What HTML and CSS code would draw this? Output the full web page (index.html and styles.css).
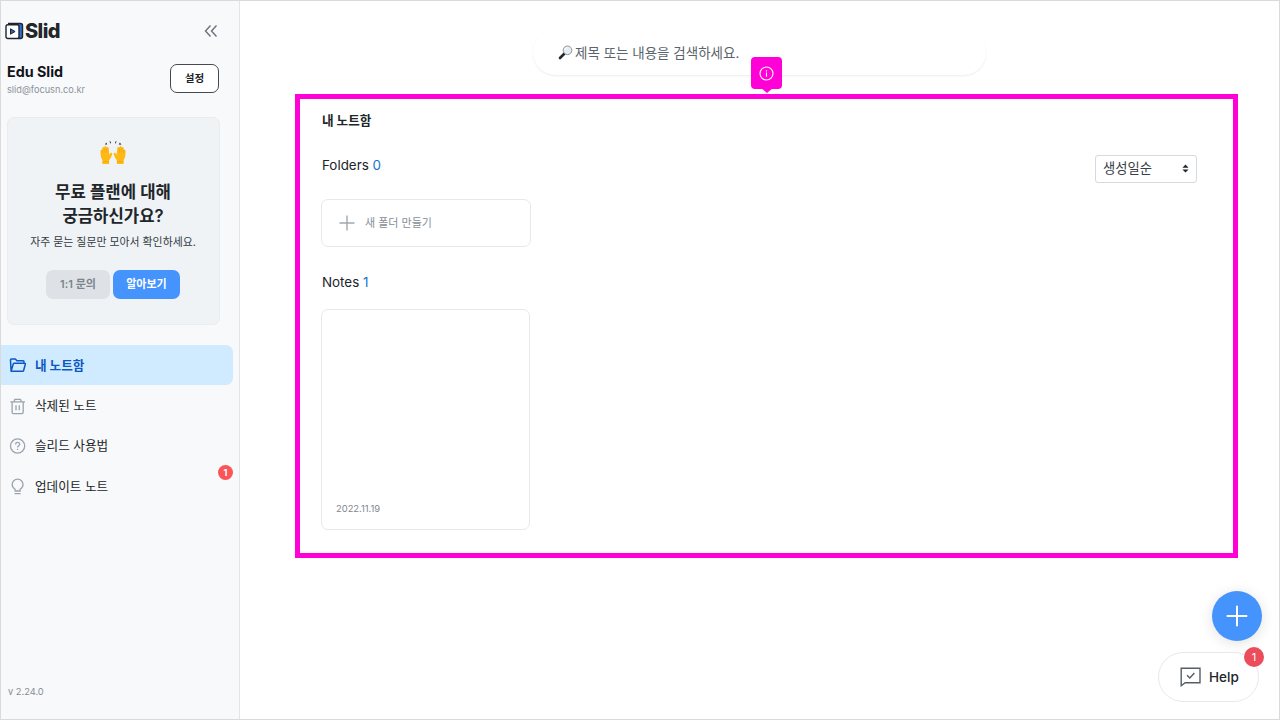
FILE: index.html
```html
<!DOCTYPE html>
<html lang="ko">
<head>
    <meta charset="UTF-8">
    <meta name="viewport" content="width=device-width, initial-scale=1.0">
    <title>Slid - 내 노트함</title>
    <link rel="stylesheet" href="styles.css">
</head>
<body>
    <aside class="sidebar">
        <div class="brand">
            <svg class="brand-icon" width="19" height="18" viewBox="0 0 19 18">
                <path d="M3 1.500h12.500a2 2 0 0 1 2 2v11a2 2 0 0 1-2 2H13" fill="#2f6fd0" stroke="#1d2430" stroke-width="1.400"/>
                <rect x="1" y="2.800" width="13" height="13.700" rx="1.800" fill="#fff" stroke="#1d2430" stroke-width="1.400"/>
                <path d="M5.500 6.800v5.400l4.600-2.700z" fill="#1d66c9" stroke="#1d2430" stroke-width="1"/>
            </svg>
            <span class="brand-name">Slid</span>
            <svg class="collapse" width="14" height="14" viewBox="0 0 14 14" fill="none" stroke="#68727d" stroke-width="1.400">
                <path d="M6.500 1.500L1.500 7l5 5.500M12.500 1.500l-5 5.500 5 5.500"/>
            </svg>
        </div>

        <div class="profile">
            <div>
                <div class="profile-name">Edu Slid</div>
                <div class="profile-mail">slid@focusn.co.kr</div>
            </div>
            <button class="settings">설정</button>
        </div>

        <div class="plan">
            <svg class="plan-icon" width="26" height="24" viewBox="0 0 26 24">
                <g id="hand">
                    <path d="M2.400 23v-4C1 17.300.4 14.500.5 9.800c0-1.300 1.400-1.400 1.600-.2l.2-2.500c.1-1.400 1.800-1.400 1.900 0l.2-1.200c.2-1.400 2-1.300 2.100 0l.2 1c.3-1.200 1.900-1.100 2 .3l.6 6.500.8-1.200c.9-1.300 2.700-.4 2.100 1-.8 2.100-1.400 4.100-3.100 5.600V23z" fill="#ffb914"/>
                    <path d="M2.200 12V8.500M4.300 11.500V7M6.600 11.500V7" fill="none" stroke="#ee9c12" stroke-width=".5"/>
                    <path d="M2.500 20.600h6.500" stroke="#f0a012" stroke-width=".7"/>
                </g>
                <use href="#hand" transform="translate(26 0) scale(-1 1)"/>
                <path d="M4.800 3.600l1.500-2 1 2zM9.200.6l1.600-.2.300 2.500zM15.200.4l1.600.2-1.800 2.300zM18.700 3.600l1.200-2 1.600 2.200z" fill="#333a40"/>
            </svg>
            <h2>무료 플랜에 대해<br>궁금하신가요?</h2>
            <p>자주 묻는 질문만 모아서 확인하세요.</p>
            <div class="plan-buttons">
                <button class="btn-gray">1:1 문의</button>
                <button class="btn-blue">알아보기</button>
            </div>
        </div>

        <nav class="menu">
            <a class="menu-item active">
                <svg width="18" height="18" viewBox="0 0 18 18" fill="none" stroke="#0b57c4" stroke-width="1.500" stroke-linejoin="round">
                    <path d="M2.100 15.200L1.500 4a1 1 0 0 1 1-1.100h3.800l1.700 1.900h6a1 1 0 0 1 1 1v1.300M2.100 15.200l2.200-7.300a1 1 0 0 1 1-.7h10.200a.8.8 0 0 1 .8 1.100l-1.700 6.200a1 1 0 0 1-1 .7z"/>
                </svg>
                <span>내 노트함</span>
            </a>
            <a class="menu-item">
                <svg width="18" height="18" viewBox="0 0 18 18" fill="none" stroke="#9aa4ae" stroke-width="1.300" stroke-linejoin="round">
                    <path d="M1.300 4.800h14.700M5 4.800l.8-2.500h5.700l.8 2.500M3.100 4.800v10.500c0 .8.500 1.300 1.300 1.300h8.500c.8 0 1.300-.5 1.300-1.300V4.800M7 8.200v5M10.300 8.200v5"/>
                </svg>
                <span>삭제된 노트</span>
            </a>
            <a class="menu-item">
                <svg width="18" height="18" viewBox="0 0 18 18" fill="none" stroke="#9aa4ae" stroke-width="1.300">
                    <circle cx="8.600" cy="9" r="7.100"/>
                    <path d="M6.600 7.400c0-2.700 4.100-2.600 4.100-.1 0 1.500-2.100 1.500-2.100 3.200M8.600 11.800v1.300"/>
                </svg>
                <span>슬리드 사용법</span>
            </a>
            <a class="menu-item">
                <svg width="18" height="18" viewBox="0 0 18 18" fill="none" stroke="#9aa4ae" stroke-width="1.300">
                    <path d="M6.100 14v-1.700c-1.700-1-2.900-2.700-2.900-4.800a5.400 5.400 0 0 1 10.800 0c0 2.100-1.200 3.800-2.900 4.800V14zM5.600 16.700h6"/>
                </svg>
                <span>업데이트 노트</span>
                <span class="menu-badge">1</span>
            </a>
        </nav>

        <div class="version">v 2.24.0</div>
    </aside>

    <main class="content">
        <div class="search">
            <svg width="15" height="15" viewBox="0 0 15 15">
                <path d="M2 13l4.500-4.500" stroke="#25292d" stroke-width="2.600" stroke-linecap="round"/>
                <circle cx="9.500" cy="5.300" r="4.300" fill="#e8ecef" stroke="#8d959b" stroke-width="1"/>
                <path d="M6.800 5a2.600 2.600 0 0 1 2.500-2.300" fill="none" stroke="#fff"/>
            </svg>
            <span>제목 또는 내용을 검색하세요.</span>
        </div>

        <section class="notebook">
            <div class="marker">
                <svg width="15" height="15" viewBox="0 0 15 15" fill="none" stroke="#fff" stroke-width="1.100">
                    <circle cx="7.500" cy="7.500" r="6.500"/>
                    <path d="M7.500 6.500v4.200M7.500 4.200v1.300"/>
                </svg>
            </div>
            <h1>내 노트함</h1>
            <div class="folders-head">
                <div class="count">Folders <b>0</b></div>
                <div class="sort">
                    <span>생성일순</span>
                    <svg width="7" height="9" viewBox="0 0 8 10" fill="#20262c"><path d="M4 .5L7.500 4h-7zM4 9.500L.5 6h7z"/></svg>
                </div>
            </div>
            <div class="new-folder">
                <svg width="16" height="16" viewBox="0 0 16 16" stroke="#a0a8b0" stroke-width="1.400"><path d="M8 .5v15M.5 8h15"/></svg>
                <span>새 폴더 만들기</span>
            </div>
            <div class="count notes-head">Notes <b>1</b></div>
            <div class="note">2022.11.19</div>
        </section>
    </main>

    <button class="add">
        <svg width="22" height="22" viewBox="0 0 22 22" stroke="#fff" stroke-width="2" stroke-linecap="round"><path d="M11 1.500v19M1.500 11h19"/></svg>
    </button>
    <div class="help">
        <svg width="22" height="20" viewBox="0 0 22 20" fill="none" stroke="#555e68" stroke-width="1.400">
            <path d="M1.200 1.200h18.800v14.500H5.200l-4 3zM7 8.200l2.800 2.800 4.600-5"/>
        </svg>
        <span>Help</span>
        <span class="help-badge">1</span>
    </div>
</body>
</html>
```
FILE: styles.css
```css
* {
    box-sizing: border-box;
}

body {
    margin: 0;
    height: 720px;
    display: flex;
    border: 1px solid #d8dadc;
    background-color: #fff;
    color: #212529;
    font-family: Inter, "Noto Sans CJK KR", sans-serif;
    overflow: hidden;
}

button {
    border: none;
    padding: 0;
    font-family: inherit;
}

h1, h2, p {
    margin: 0;
}

svg {
    display: block;
    flex: none;
}

/* Sidebar */
.sidebar {
    width: 239px;
    flex: none;
    display: flex;
    flex-direction: column;
    background-color: #f8f9fb;
    border-right: 1px solid #e2e4e7;
}

.brand {
    display: flex;
    align-items: center;
    height: 24px;
    margin: 18px 21px 0 4px;
}

.brand-name {
    margin-left: 1px;
    font-size: 20px;
    font-weight: 800;
    letter-spacing: -0.6px;
    color: #24262a;
}

.collapse {
    margin-left: auto;
}

.profile {
    display: flex;
    justify-content: space-between;
    height: 30px;
    margin: 21px 20px 0 6px;
}

.profile-name {
    font-size: 14.3px;
    font-weight: 700;
    line-height: 16px;
    color: #111418;
}

.profile-mail {
    margin-top: 4px;
    font-size: 9.2px;
    line-height: 12px;
    color: #8b939b;
}

.settings {
    width: 49px;
    height: 29px;
    border: 1px solid #444a50;
    border-radius: 7px;
    background-color: #fff;
    font-size: 10.5px;
    font-weight: 700;
    line-height: 26px;
    color: #212529;
}

.plan {
    display: flex;
    flex-direction: column;
    align-items: center;
    width: 213px;
    height: 208px;
    margin: 23px 0 0 6px;
    padding: 23px 1px 0 0;
    border: 1px solid #eaedf0;
    border-radius: 7px;
    background-color: #eff3f6;
    text-align: center;
}

.plan h2 {
    margin-top: 15px;
    font-size: 16.7px;
    font-weight: 600;
    line-height: 24px;
}

.plan p {
    margin-top: 6px;
    font-size: 10.9px;
    line-height: 16px;
    color: #343a40;
    white-space: nowrap;
}

.plan-buttons {
    display: flex;
    gap: 3px;
    margin-top: 20px;
}

.plan-buttons button {
    height: 29px;
    padding-bottom: 3px;
    border-radius: 7px;
    font-size: 11px;
    font-weight: 600;
}

.btn-gray {
    width: 64px;
    background-color: #dee2e6;
    color: #7b848c;
}

.btn-blue {
    width: 67px;
    background-color: #4593fc;
    color: #fff;
}

.menu {
    margin-top: 20px;
}

.menu-item {
    position: relative;
    display: flex;
    align-items: center;
    gap: 8px;
    width: 232px;
    height: 40.4px;
    padding-left: 8px;
    font-size: 12.6px;
}

.menu-item span {
    margin-top: -2px;
}

.menu-item.active {
    border-radius: 0 7px 7px 0;
    background-color: #d0eaff;
    font-weight: 700;
    color: #0b57c4;
}

.menu-badge {
    position: absolute;
    top: 1px;
    right: 0;
    width: 15px;
    height: 15px;
    border-radius: 50%;
    background-color: #fc5558;
    color: #fff;
    font-size: 9px;
    font-weight: 700;
    line-height: 15px;
    text-align: center;
}

.version {
    margin: auto 0 20px 7px;
    font-size: 9.3px;
    line-height: 14px;
    color: #868e96;
}

/* Main area */
.content {
    flex: 1;
}

.search {
    display: flex;
    align-items: center;
    gap: 3px;
    width: 453px;
    height: 45px;
    margin: 29px 0 0 293px;
    padding: 0 0 1px 25px;
    border-radius: 23px;
    box-shadow: 0 1px 2px rgba(0, 0, 0, 0.08);
    font-size: 13.5px;
    color: #5b636b;
}

.search span {
    margin-left: -1px;
}

.notebook {
    position: relative;
    width: 943px;
    height: 464px;
    margin: 18.5px 0 0 55px;
    padding: 13px 36px 0 21px;
    border: 5px solid #ff00d6;
}

/* Callout pin sitting on the top edge of the frame */
.marker {
    position: absolute;
    top: -41.5px;
    left: 451px;
    display: flex;
    align-items: center;
    justify-content: center;
    width: 31px;
    height: 32px;
    border-radius: 4px;
    background-color: #ff00d6;
}

.marker::after {
    content: "";
    position: absolute;
    top: 31px;
    left: 10px;
    border: 6px solid transparent;
    border-top: 5px solid #ff00d6;
    border-bottom: none;
}

.notebook h1 {
    margin-left: 1px;
    font-size: 12.6px;
    font-weight: 700;
    line-height: 18px;
}

.folders-head {
    display: flex;
    justify-content: space-between;
    margin-top: 25px;
}

.count {
    margin-left: 1px;
    font-size: 13.4px;
    line-height: 20px;
}

.count b {
    font-weight: 400;
    color: #1273d9;
}

.sort {
    display: flex;
    align-items: center;
    justify-content: space-between;
    width: 102px;
    height: 28px;
    padding: 0 7px;
    border: 1px solid #d5dadf;
    border-radius: 3px;
    font-size: 13.3px;
    line-height: 24px;
    color: #3a4047;
}

.sort span {
    margin-top: -2px;
}

.new-folder {
    display: flex;
    align-items: center;
    gap: 10px;
    width: 210px;
    height: 48px;
    margin-top: 16px;
    padding-left: 17px;
    border: 1px solid #e6e9eb;
    border-radius: 7px;
    font-size: 11px;
    color: #868e96;
}

.new-folder span {
    margin-top: -2px;
}

.notes-head {
    margin-top: 25px;
}

.note {
    display: flex;
    align-items: flex-end;
    width: 209px;
    height: 221px;
    margin: 17px 0 0;
    padding: 0 0 13px 14px;
    border: 1px solid #e6e9eb;
    border-radius: 7px;
    font-size: 9.4px;
    line-height: 14px;
    color: #7f878f;
}

/* Floating buttons */
.add {
    position: absolute;
    left: 1212px;
    top: 591px;
    display: flex;
    align-items: center;
    justify-content: center;
    width: 50px;
    height: 50px;
    border-radius: 50%;
    background-color: #4593fc;
    box-shadow: 0 2px 14px rgba(0, 0, 0, 0.12);
}

.help {
    position: absolute;
    left: 1158px;
    top: 652px;
    display: flex;
    align-items: center;
    gap: 7px;
    width: 101px;
    height: 50px;
    padding-left: 21px;
    border: 1px solid #e6e9eb;
    border-radius: 26px;
    background-color: #fff;
    font-size: 13.5px;
    font-weight: 500;
}

.help-badge {
    position: absolute;
    top: -6px;
    right: -6px;
    width: 20px;
    height: 20px;
    border-radius: 50%;
    background-color: #eb4d5c;
    color: #fff;
    font-size: 11px;
    font-weight: 400;
    line-height: 20px;
    text-align: center;
}
```
